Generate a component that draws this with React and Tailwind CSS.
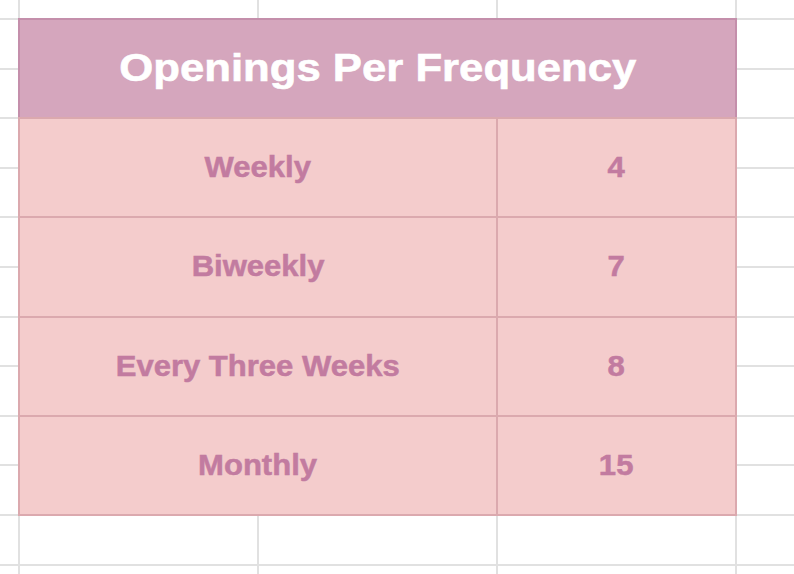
export default function App() {
  const rows = [
    ["Weekly", "4"],
    ["Biweekly", "7"],
    ["Every Three Weeks", "8"],
    ["Monthly", "15"],
  ];
  const blanks = Array.from({ length: 35 });
  return (
    <div className="w-[794px] h-[574px] overflow-hidden bg-white font-['Liberation_Sans',Arial,sans-serif]">
      <div className="grid h-[640px] grid-cols-[18px_237px_237px_237px_1fr] grid-rows-[18px_repeat(12,47.6px)] gap-[2px] bg-[#e1e1e1]">
        <div className="col-start-2 col-span-3 row-start-2 row-span-10 -m-[2px] grid grid-cols-[476px_1fr] grid-rows-[repeat(5,1fr)] gap-[2px] p-[2px] bg-[#dba9ae]">
          <div className="col-span-2 -mx-[2px] -mt-[2px] border-2 border-b-0 border-[#c48fab] bg-[#d5a6bd] flex items-center justify-center">
            <span className="-mt-[2px] block scale-x-[1.12] text-[39px] font-bold leading-none text-white [-webkit-text-stroke:0.6px_#ffffff]">
              Openings Per Frequency
            </span>
          </div>
          {rows.map(([label, n]) => (
            <>
              <div key={label} className="bg-[#f4cccc] flex items-center justify-center">
                <span className="block scale-x-[1.07] text-[29px] font-bold leading-none text-[#c27ba0] [-webkit-text-stroke:0.5px_#c27ba0]">
                  {label}
                </span>
              </div>
              <div key={label + "n"} className="bg-[#f4cccc] flex items-center justify-center">
                <span className="block scale-x-[1.07] text-[29px] font-bold leading-none text-[#c27ba0] [-webkit-text-stroke:0.5px_#c27ba0]">
                  {n}
                </span>
              </div>
            </>
          ))}
        </div>
        {blanks.map((_, i) => (
          <div key={i} className="bg-white" />
        ))}
      </div>
    </div>
  );
}
